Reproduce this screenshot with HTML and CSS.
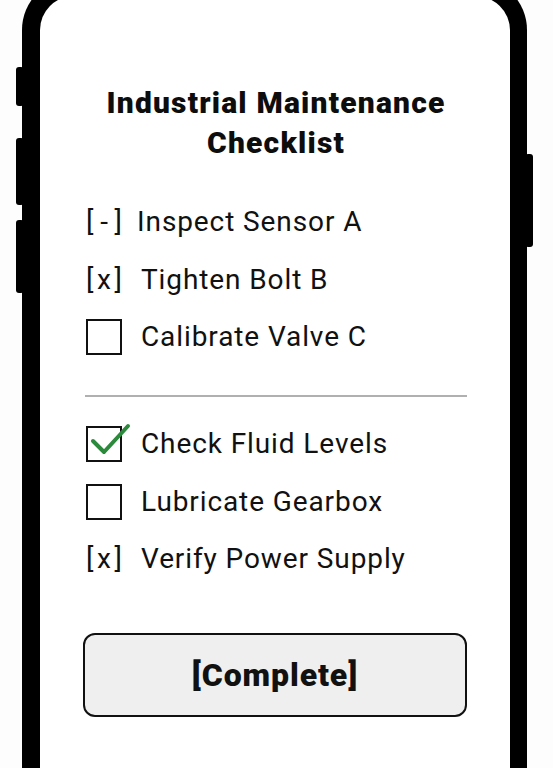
FILE: index.html
```html
<!DOCTYPE html>
<html>
<head>
<meta charset="utf-8">
<link rel="stylesheet" href="styles.css">
</head>
<body>
<div class="phone">
  <span class="side side-l1"></span>
  <span class="side side-l2"></span>
  <span class="side side-l3"></span>
  <span class="side side-r1"></span>
  <div class="screen">
    <h1 class="title">Industrial Maintenance<br>Checklist</h1>
    <ul class="list">
      <li class="row"><span class="mark"><span>[</span><span>-</span><span>]</span></span><span class="label label-tight">Inspect Sensor A</span></li>
      <li class="row"><span class="mark"><span>[</span><span>x</span><span>]</span></span><span class="label">Tighten Bolt B</span></li>
      <li class="row"><span class="box"></span><span class="label">Calibrate Valve C</span></li>
    </ul>
    <div class="divider"></div>
    <ul class="list">
      <li class="row"><span class="box checked"><svg class="tick" viewBox="0 0 42 38" width="42" height="38"><path d="M4 18 L15 29 L39 3" fill="none" stroke="#2b8a3b" stroke-width="4" stroke-linecap="round" stroke-linejoin="round"/></svg></span><span class="label">Check Fluid Levels</span></li>
      <li class="row"><span class="box"></span><span class="label">Lubricate Gearbox</span></li>
      <li class="row"><span class="mark"><span>[</span><span>x</span><span>]</span></span><span class="label">Verify Power Supply</span></li>
    </ul>
    <button class="complete">[Complete]</button>
  </div>
</div>
</body>
</html>
```

FILE: styles.css
```css
html, body {
  margin: 0;
  padding: 0;
}
body {
  background: #fdfdfd;
  width: 553px;
  height: 768px;
  overflow: hidden;
  font-family: Roboto, "Liberation Sans", sans-serif;
  color: #111;
}
.phone {
  position: relative;
  margin: -22px 0 0 22px;
  width: 505px;
  height: 800px;
  box-sizing: border-box;
  border: 18px solid #000;
  border-right-width: 17px;
  border-bottom-width: 0;
  border-radius: 52px 52px 0 0;
  background: #fff;
}
.side {
  position: absolute;
  background: #000;
  border-radius: 3px;
}
.side-l1 { left: -24px; width: 8px; top: 71px; height: 39px; }
.side-l2 { left: -24px; width: 8px; top: 142px; height: 67px; }
.side-l3 { left: -24px; width: 8px; top: 224px; height: 73px; }
.side-r1 { right: -23px; width: 8px; top: 158px; height: 93px; }
.screen {
  padding: 87px 44px 0 46px;
  display: flex;
  flex-direction: column;
}
.title {
  margin: 0 0 41px;
  font-size: 30px;
  font-weight: 900;
  letter-spacing: 1.2px;
  line-height: 40px;
  text-align: center;
  color: #0d0d0d;
}
.list {
  list-style: none;
  margin: 0;
  padding: 0;
  display: flex;
  flex-direction: column;
  gap: 21.5px;
}
.row {
  display: flex;
  align-items: center;
  height: 36px;
  gap: 19px;
}
.mark {
  width: 36px;
  display: flex;
  justify-content: space-between;
  font-size: 28px;
  line-height: 36px;
}
.box {
  position: relative;
  width: 36px;
  height: 36px;
  box-sizing: border-box;
  border: 2.5px solid #111;
  flex: none;
}
.tick {
  position: absolute;
  left: 1px;
  top: -5px;
}
.label {
  font-size: 28px;
  letter-spacing: 0.9px;
  line-height: 36px;
}
.label-tight {
  margin-left: -4px;
}
.divider {
  height: 2px;
  background: #b0b0b0;
  margin: 40px -1px 29px -1px;
}
.complete {
  margin: 56px -1px 0 -3px;
  height: 84px;
  box-sizing: border-box;
  border: 2.5px solid #111;
  border-radius: 12px;
  background: #efefef;
  font-family: Roboto, "Liberation Sans", sans-serif;
  font-size: 32px;
  font-weight: 900;
  letter-spacing: 0.9px;
  color: #111;
  padding: 0;
}
```
